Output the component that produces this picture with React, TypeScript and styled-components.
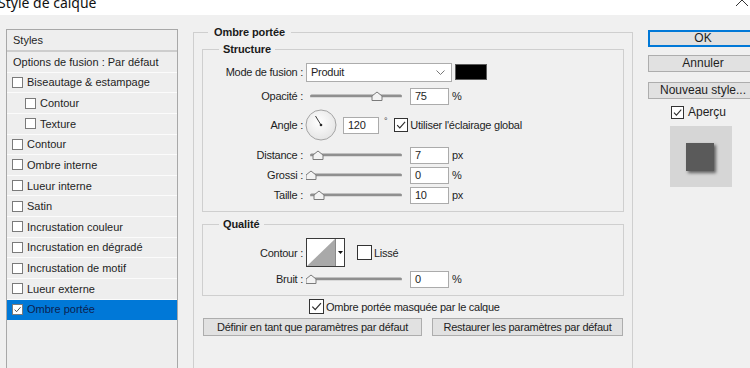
import styled, { createGlobalStyle } from 'styled-components'

const GlobalStyle = createGlobalStyle`
    *, *::before, *::after {
        box-sizing: border-box;
    }
    html,
    body {
        margin: 0;
        padding: 0;
        background: #f0f0f0;
        overflow: hidden;
    }
    body {
        font-family: 'Liberation Sans', Arial, sans-serif;
        font-size: 11px;
        color: #1e1e1e;
    }
`

const STYLE_ITEMS = [
    { label: 'Biseautage & estampage', indent: false },
    { label: 'Contour', indent: true },
    { label: 'Texture', indent: true },
    { label: 'Contour', indent: false },
    { label: 'Ombre interne', indent: false },
    { label: 'Lueur interne', indent: false },
    { label: 'Satin', indent: false },
    { label: 'Incrustation couleur', indent: false },
    { label: 'Incrustation en dégradé', indent: false },
    { label: 'Incrustation de motif', indent: false },
    { label: 'Lueur externe', indent: false },
    { label: 'Ombre portée', indent: false, active: true },
]

const CheckMark = ({ size }: { size: number }) => (
    <svg width={size} height={size} viewBox="0 0 14 14">
        <path d="M2.5 7.2 L5.6 10.4 L11.8 3.4" fill="none" stroke="#2b2b2b" strokeWidth="1.3" />
    </svg>
)

const Check = ({ size, checked, soft }: { size: number; checked?: boolean; soft?: boolean }) => (
    <CheckBox $size={size} $soft={soft}>
        {checked && <CheckMark size={size - 2} />}
    </CheckBox>
)

const Slider = ({ pos }: { pos: number }) => (
    <svg width={97} height={12} viewBox="0 0 97 12">
        <rect x={4} y={4.5} width={92} height={3} rx={1.5} fill="#8f8f8f" />
        <rect x={5} y={7} width={90} height={1} fill="#d9d9d9" />
        <path
            d={`M${pos} 2 L${pos + 5} 6 L${pos + 5} 10.5 L${pos - 5} 10.5 L${pos - 5} 6 Z`}
            fill="#f3f3f3"
            stroke="#7b7b7b"
            strokeWidth="1"
        />
    </svg>
)

const Dial = () => (
    <svg width={32} height={32} viewBox="0 0 32 32">
        <defs>
            <radialGradient id="dialFill" cx="0.45" cy="0.4" r="0.65">
                <stop offset="0" stopColor="#ffffff" />
                <stop offset="1" stopColor="#e3e3e3" />
            </radialGradient>
        </defs>
        <circle cx={16} cy={16} r={15} fill="url(#dialFill)" stroke="#a4a4a4" strokeWidth="1" />
        <line x1={16} y1={16} x2={10.5} y2={7} stroke="#3a3a3a" strokeWidth="1" />
        <circle cx={16} cy={16} r={1.3} fill="#2a2a2a" />
    </svg>
)

const StyleList = () => (
    <StylesPanel>
        <PanelHeader>Styles</PanelHeader>
        <ListRow $indent={6}>Options de fusion : Par défaut</ListRow>
        {STYLE_ITEMS.map((item, i) => (
            <ListRow key={i} $indent={item.indent ? 18 : 5} $active={item.active}>
                <Check size={11} checked={item.active} soft />
                <ListLabel>{item.label}</ListLabel>
            </ListRow>
        ))}
    </StylesPanel>
)

export default function App() {
    return (
        <>
            <GlobalStyle />
            <Window>
                <TitleBar>
                    <Title>Style de calque</Title>
                    <svg width={14} height={8} viewBox="0 0 14 8">
                        <path d="M1 -6 L13 6 M13 -6 L1 6" stroke="#333" strokeWidth="1" />
                    </svg>
                </TitleBar>

                <Body>
                    <StyleList />

                    <Main>
                        <Group $pt={16} $px={8} $pb={0} $full>
                            <Legend $left={14} $pad={6}>
                                Ombre portée
                            </Legend>

                            <Group $pt={12} $px={0} $pb={6}>
                                <Legend $left={16} $pad={4}>
                                    Structure
                                </Legend>

                                <FormRow $h={20} $mt={0}>
                                    <Label>Mode de fusion :</Label>
                                    <Controls>
                                        <Select>
                                            <span>Produit</span>
                                            <svg width={9} height={5} viewBox="0 0 9 5">
                                                <path d="M0.5 0.5 L4.5 4.5 L8.5 0.5" fill="none" stroke="#777" />
                                            </svg>
                                        </Select>
                                        <Swatch />
                                    </Controls>
                                </FormRow>

                                <FormRow $h={20} $mt={4}>
                                    <Label>Opacité :</Label>
                                    <Controls>
                                        <Slider pos={71} />
                                        <NumBox $w={39}>75</NumBox>
                                        <Unit>%</Unit>
                                    </Controls>
                                </FormRow>

                                <FormRow $h={32} $mt={3}>
                                    <Label>Angle :</Label>
                                    <Controls>
                                        <DialWrap>
                                            <Dial />
                                        </DialWrap>
                                        <NumBox $w={36} $ml={6}>
                                            120
                                        </NumBox>
                                        <Degree>°</Degree>
                                        <CheckLabel $ml={7}>
                                            <Check size={14} checked />
                                            <span>Utiliser l'éclairage global</span>
                                        </CheckLabel>
                                    </Controls>
                                </FormRow>

                                <FormRow $h={20} $mt={4}>
                                    <Label>Distance :</Label>
                                    <Controls>
                                        <Slider pos={12} />
                                        <NumBox $w={39}>7</NumBox>
                                        <Unit>px</Unit>
                                    </Controls>
                                </FormRow>

                                <FormRow $h={20} $mt={0}>
                                    <Label>Grossi :</Label>
                                    <Controls>
                                        <Slider pos={5} />
                                        <NumBox $w={39}>0</NumBox>
                                        <Unit>%</Unit>
                                    </Controls>
                                </FormRow>

                                <FormRow $h={20} $mt={0}>
                                    <Label>Taille :</Label>
                                    <Controls>
                                        <Slider pos={13} />
                                        <NumBox $w={39}>10</NumBox>
                                        <Unit>px</Unit>
                                    </Controls>
                                </FormRow>
                            </Group>

                            <Group $pt={13} $px={0} $pb={6} $mt={12}>
                                <Legend $left={16} $pad={4}>
                                    Qualité
                                </Legend>

                                <FormRow $h={29} $mt={0}>
                                    <Label>Contour :</Label>
                                    <Controls>
                                        <ContourPicker>
                                            <svg width={28} height={27} viewBox="0 0 28 27">
                                                <rect width={28} height={27} fill="#fff" />
                                                <path d="M0 27 L28 0 L28 27 Z" fill="#a9a9a9" />
                                            </svg>
                                            <PickerArrow>
                                                <svg width={5} height={3} viewBox="0 0 5 3">
                                                    <path d="M0 0 L5 0 L2.5 3 Z" fill="#111" />
                                                </svg>
                                            </PickerArrow>
                                        </ContourPicker>
                                        <CheckLabel $ml={12}>
                                            <Check size={15} />
                                            <span>Lissé</span>
                                        </CheckLabel>
                                    </Controls>
                                </FormRow>

                                <FormRow $h={20} $mt={2}>
                                    <Label>Bruit :</Label>
                                    <Controls>
                                        <Slider pos={5} />
                                        <NumBox $w={39}>0</NumBox>
                                        <Unit>%</Unit>
                                    </Controls>
                                </FormRow>
                            </Group>

                            <MaskRow>
                                <CheckLabel $ml={0}>
                                    <Check size={15} checked />
                                    <span>Ombre portée masquée par le calque</span>
                                </CheckLabel>
                            </MaskRow>

                            <ButtonRow>
                                <FlatButton $w={219}>Définir en tant que paramètres par défaut</FlatButton>
                                <FlatButton $w={191}>Restaurer les paramètres par défaut</FlatButton>
                            </ButtonRow>
                        </Group>
                    </Main>

                    <Side>
                        <SideButton $primary>OK</SideButton>
                        <SideButton $mt={8}>Annuler</SideButton>
                        <SideButton $mt={10}>Nouveau style...</SideButton>
                        <PreviewToggle>
                            <Check size={13} checked />
                            <span>Aperçu</span>
                        </PreviewToggle>
                        <Preview>
                            <PreviewShape />
                        </Preview>
                    </Side>
                </Body>
            </Window>
        </>
    )
}

const Window = styled.div`
    width: 750px;
    height: 368px;
    overflow: hidden;
    display: flex;
    flex-direction: column;
    background: #f0f0f0;
`

const TitleBar = styled.div`
    height: 15px;
    flex-shrink: 0;
    background: #ffffff;
    display: flex;
    justify-content: space-between;
    align-items: flex-start;
    padding-right: 1px;
    overflow: hidden;
`

const Title = styled.span`
    font-family: 'Noto Sans', 'Liberation Sans', sans-serif;
    font-size: 14px;
    line-height: 14px;
    margin-top: -4px;
    margin-left: -2px;
    color: #111;
`

const Body = styled.div`
    display: flex;
    align-items: flex-start;
    flex: 1;
`

const StylesPanel = styled.div`
    flex-shrink: 0;
    width: 172px;
    height: 400px;
    margin: 14px 0 0 6px;
    border: 1px solid #a8a8a8;
    background: #eeeeee;
`

const PanelHeader = styled.div`
    height: 22px;
    padding-left: 6px;
    line-height: 20px;
    border-bottom: 2px solid #cdcdcd;
`

const ListRow = styled.div<{ $indent: number; $active?: boolean }>`
    display: flex;
    align-items: center;
    height: 20.64px;
    padding-left: ${({ $indent }) => $indent}px;
    border-bottom: 1px solid ${({ $active }) => ($active ? '#0078d7' : '#fbfbfb')};
    background: ${({ $active }) => ($active ? '#0078d7' : '#eeeeee')};
    color: ${({ $active }) => ($active ? '#0c214f' : '#1e1e1e')};
    white-space: nowrap;
`

const ListLabel = styled.span`
    margin-left: 4px;
`

const CheckBox = styled.span<{ $size: number; $soft?: boolean }>`
    display: inline-flex;
    align-items: center;
    justify-content: center;
    flex-shrink: 0;
    width: ${({ $size }) => $size}px;
    height: ${({ $size }) => $size}px;
    border: 1px solid ${({ $soft }) => ($soft ? '#7a7a7a' : '#333333')};
    background: #ffffff;
`

const Main = styled.div`
    flex-shrink: 0;
    width: 440px;
    margin: 17px 0 0 15px;
`

const Group = styled.div<{ $pt: number; $px: number; $pb: number; $mt?: number; $full?: boolean }>`
    position: relative;
    border: 1px solid #cfcfcf;
    padding: ${({ $pt, $px, $pb }) => `${$pt}px ${$px}px ${$pb}px`};
    margin-top: ${({ $mt }) => $mt ?? 0}px;
    height: ${({ $full }) => ($full ? '400px' : 'auto')};
`

const Legend = styled.span<{ $left: number; $pad: number }>`
    position: absolute;
    top: -7px;
    left: ${({ $left }) => $left}px;
    padding: 0 ${({ $pad }) => $pad}px;
    background: #f0f0f0;
    font-weight: bold;
    line-height: 13px;
    letter-spacing: -0.1px;
    color: #1a1a1a;
`

const FormRow = styled.div<{ $h: number; $mt: number }>`
    display: grid;
    grid-template-columns: 100px auto;
    column-gap: 3px;
    align-items: center;
    height: ${({ $h }) => $h}px;
    margin-top: ${({ $mt }) => $mt}px;
`

const Label = styled.span`
    text-align: right;
    letter-spacing: -0.25px;
    white-space: nowrap;
`

const Controls = styled.div`
    display: flex;
    align-items: center;
    letter-spacing: -0.25px;
    white-space: nowrap;
`

const Select = styled.div`
    display: flex;
    align-items: center;
    justify-content: space-between;
    width: 146px;
    height: 19px;
    padding: 0 6px 0 4px;
    border: 1px solid #acacac;
    background: #ffffff;
`

const Swatch = styled.div`
    width: 32px;
    height: 16px;
    margin-left: 3px;
    background: #000000;
    border: 1px solid #5c5c5c;
`

const NumBox = styled.div<{ $w: number; $ml?: number }>`
    width: ${({ $w }) => $w}px;
    height: 17px;
    margin-left: ${({ $ml }) => $ml ?? 7}px;
    padding-left: 4px;
    line-height: 15px;
    border: 1px solid #ababab;
    background: #ffffff;
`

const Unit = styled.span`
    margin-left: 3px;
`

const DialWrap = styled.div`
    display: flex;
    margin-left: -1px;
`

const Degree = styled.span`
    align-self: flex-start;
    margin: 7px 0 0 5px;
    font-size: 9px;
    color: #444;
`

const CheckLabel = styled.label<{ $ml: number }>`
    display: flex;
    align-items: center;
    gap: 2px;
    margin-left: ${({ $ml }) => $ml}px;
    letter-spacing: -0.25px;
    white-space: nowrap;
`

const ContourPicker = styled.div`
    display: flex;
    width: 39px;
    height: 29px;
    border: 1px solid #3a3a3a;
    background: #ffffff;
`

const PickerArrow = styled.div`
    display: flex;
    align-items: center;
    justify-content: center;
    width: 9px;
    border-left: 1px solid #8a8a8a;
`

const MaskRow = styled.div`
    display: flex;
    align-items: center;
    height: 15px;
    margin-top: 3px;
    padding-left: 107px;
`

const ButtonRow = styled.div`
    display: flex;
    gap: 10px;
    margin-top: 4px;
    padding-left: 1px;
`

const FlatButton = styled.div<{ $w: number }>`
    width: ${({ $w }) => $w}px;
    height: 18px;
    border: 1px solid #adadad;
    background: #e1e1e1;
    text-align: center;
    line-height: 16px;
    letter-spacing: -0.25px;
    white-space: nowrap;
`

const Side = styled.div`
    flex-shrink: 0;
    width: 110px;
    margin: 15px 0 0 15px;
    display: flex;
    flex-direction: column;
    align-items: flex-start;
`

const SideButton = styled.div<{ $primary?: boolean; $mt?: number }>`
    width: 110px;
    height: 17px;
    margin-top: ${({ $mt }) => $mt ?? 0}px;
    border: 1px solid ${({ $primary }) => ($primary ? '#0078d7' : '#adadad')};
    box-shadow: ${({ $primary }) => ($primary ? 'inset 0 0 0 1px #0078d7' : 'none')};
    background: #e1e1e1;
    font-size: 12px;
    line-height: 15px;
    text-align: center;
    white-space: nowrap;
`

const PreviewToggle = styled.label`
    display: flex;
    align-items: center;
    gap: 4px;
    height: 14px;
    margin: 6px 0 0 23px;
    font-size: 12px;
`

const Preview = styled.div`
    width: 62px;
    height: 61px;
    margin: 7px 0 0 22px;
    padding: 17px 0 0 16px;
    background: #d6d6d6;
`

const PreviewShape = styled.div`
    width: 28px;
    height: 28px;
    background: #5a5a5a;
    box-shadow: 2px 2px 3px rgba(0, 0, 0, 0.55);
`
